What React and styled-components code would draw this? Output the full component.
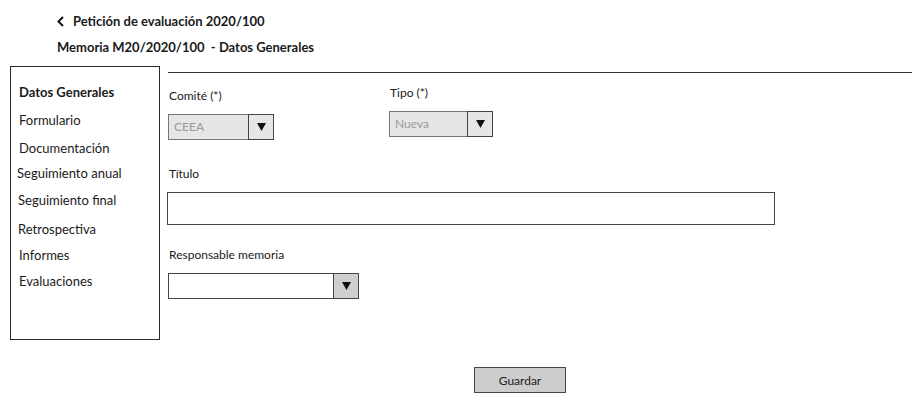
import React from "react";
import styled, { createGlobalStyle } from "styled-components";

const Global = createGlobalStyle`
  html, body { margin: 0; padding: 0; background: #fff; }
  body { font-family: Lato, "Open Sans", sans-serif; color: #1a1a1a; }
  * { box-sizing: border-box; }
`;

const Page = styled.div`
  width: 923px;
  height: 401px;
  display: flex;
  flex-direction: column;
  overflow: hidden;
`;

const Header = styled.header`
  padding: 12px 0 0 57px;
  display: flex;
  flex-direction: column;
  gap: 8px;
`;

const TitleRow = styled.div`
  display: flex;
  align-items: center;
  gap: 9px;
  height: 18px;
  font-size: 13px;
  font-weight: 700;
`;

const Subtitle = styled.div`
  height: 18px;
  line-height: 18px;
  font-size: 13px;
  font-weight: 700;
  white-space: pre;
`;

const Main = styled.div`
  display: flex;
  margin-top: 10px;
  padding-left: 10px;
  gap: 8px;
`;

const Sidebar = styled.nav`
  width: 150px;
  height: 274px;
  border: 1px solid #2a2a2a;
  padding: 17px 0 0 8px;
  display: flex;
  flex-direction: column;
  gap: 11px;
`;

const NavItem = styled.div`
  height: 16px;
  line-height: 16px;
  font-size: 13px;
  font-weight: ${(p) => (p.$active ? 700 : 400)};
  margin-left: ${(p) => p.$dx || 0}px;
  transform: translateY(${(p) => p.$dy || 0}px);
`;

const Content = styled.section`
  flex: 1;
  margin-top: 6px;
  margin-right: 11px;
  border-top: 1px solid #333;
  padding-top: 13px;
  display: flex;
  flex-direction: column;
`;

const FieldRow = styled.div`
  display: flex;
  align-items: flex-start;
`;

const Field = styled.div`
  display: flex;
  flex-direction: column;
  width: ${(p) => p.$width || "auto"};
  margin-top: ${(p) => p.$top || 0}px;
`;

const Label = styled.label`
  font-size: 12px;
  line-height: 14px;
  height: 14px;
  margin-bottom: 11px;
  padding-left: 1px;
`;

const Select = styled.div`
  display: flex;
  width: ${(p) => p.$width}px;
  height: 26px;
  border: 1px solid ${(p) => (p.$disabled ? "#777" : "#444")};
  background: ${(p) => (p.$disabled ? "#e6e6e6" : "#fff")};
`;

const SelectValue = styled.div`
  flex: 1;
  padding-left: 5px;
  font-size: 12px;
  line-height: 24px;
  color: #9a9a9a;
`;

const Arrow = styled.div`
  width: 26px;
  margin: -1px -1px -1px 0;
  border: 1px solid #444;
  background: ${(p) => (p.$shade ? "#cfcfcf" : "transparent")};
  display: flex;
  align-items: center;
  justify-content: center;
`;

const TextInput = styled.div`
  width: 608px;
  height: 33px;
  border: 1px solid #444;
  background: #fff;
  margin-left: -1px;
`;

const Footer = styled.div`
  padding: 27px 0 0 474px;
`;

const Button = styled.button`
  width: 92px;
  height: 26px;
  border: 1px solid #444;
  background: #cccccc;
  font-family: Lato, sans-serif;
  font-size: 12px;
  color: #1a1a1a;
  padding: 0;
`;

const Tri = () => (
  <svg width="9" height="8" viewBox="0 0 9 8">
    <polygon points="0,0 9,0 4.5,8" fill="#111" />
  </svg>
);

const Chevron = () => (
  <svg width="7" height="11" viewBox="0 0 7 11">
    <polyline points="6,1 1.5,5.5 6,10" fill="none" stroke="#111" strokeWidth="2" />
  </svg>
);

const navItems = [
  ["Datos Generales", 0, 0, true],
  ["Formulario", 0, 1],
  ["Documentación", 0, 2],
  ["Seguimiento anual", -2, 0],
  ["Seguimiento final", -1, 0],
  ["Retrospectiva", -1, 2],
  ["Informes", 0, 1],
  ["Evaluaciones", 0, 0],
];

export default function App() {
  return (
    <Page>
      <Global />
      <Header>
        <TitleRow>
          <Chevron />
          <span>Petición de evaluación 2020/100</span>
        </TitleRow>
        <Subtitle>{"Memoria M20/2020/100  - Datos Generales"}</Subtitle>
      </Header>
      <Main>
        <Sidebar>
          {navItems.map(([t, dx, dy, a]) => (
            <NavItem key={t} $dx={dx} $dy={dy} $active={a}>
              {t}
            </NavItem>
          ))}
        </Sidebar>
        <Content>
          <FieldRow>
            <Field $width="221px" $top={3}>
              <Label>Comité (*)</Label>
              <Select $width={106} $disabled>
                <SelectValue>CEEA</SelectValue>
                <Arrow>
                  <Tri />
                </Arrow>
              </Select>
            </Field>
            <Field>
              <Label>Tipo (*)</Label>
              <Select $width={104} $disabled>
                <SelectValue>Nueva</SelectValue>
                <Arrow>
                  <Tri />
                </Arrow>
              </Select>
            </Field>
          </FieldRow>
          <Field $top={27}>
            <Label>Título</Label>
            <TextInput />
          </Field>
          <Field $top={23}>
            <Label>Responsable memoria</Label>
            <Select $width={191}>
              <SelectValue />
              <Arrow $shade>
                <Tri />
              </Arrow>
            </Select>
          </Field>
        </Content>
      </Main>
      <Footer>
        <Button>Guardar</Button>
      </Footer>
    </Page>
  );
}
